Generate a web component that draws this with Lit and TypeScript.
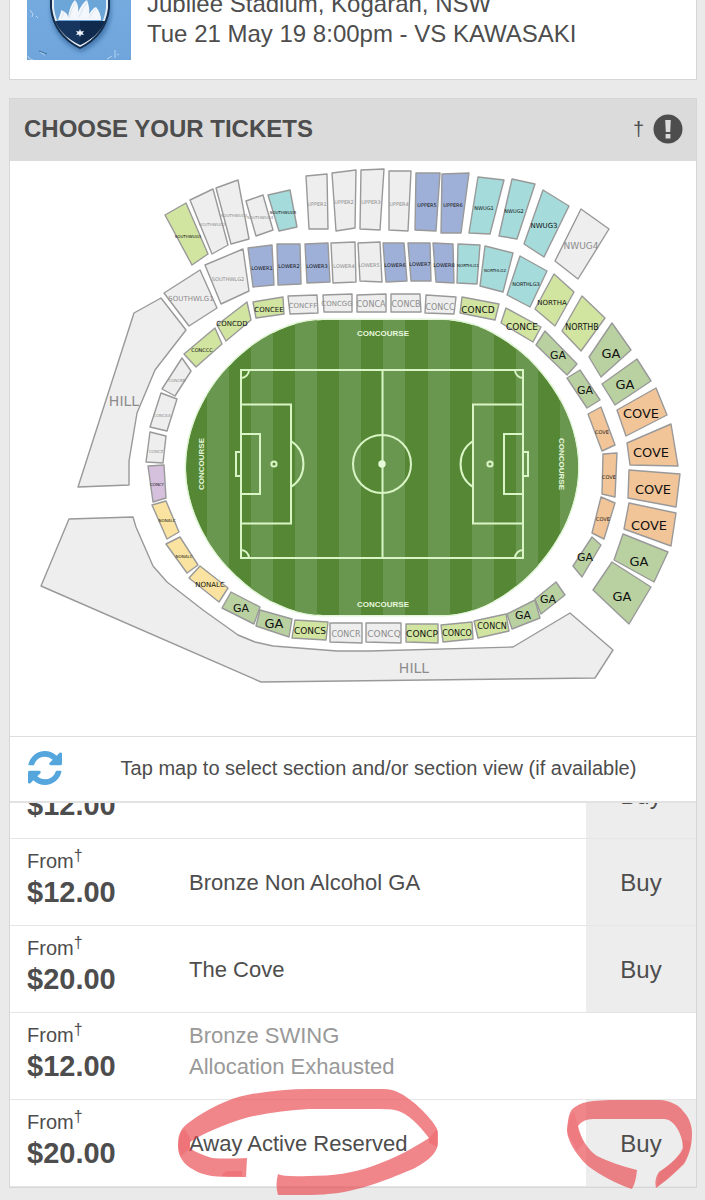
import { LitElement, html, css, svg, nothing } from "lit";
import { customElement, property } from "lit/decorators.js";

type Kind = "off" | "lime" | "sage" | "blue" | "teal" | "cove" | "sand" | "lilac";

interface Section {
  kind: Kind;
  points: string;
  label: string;
  x: number;
  y: number;
  size: number;
}

const s = (kind: Kind, label: string, size: number, x: number, y: number, points: string): Section => ({
  kind, label, size, x, y, points,
});

const SECTIONS: Section[] = [
  s("off", "HILL", 14, 124, 401, "161,298 134,313 78,487 129,485 129,461 137,413 155,370 186,330"),
  s("off", "HILL", 14, 414, 668, "69,519 133,517 136,527 153,566 167,582 203,610 238,635 255,642 273,646 337,651 370,651 513,647 570,613 613,650 595,678 261,682 41,586"),
  s("lime", "SOUTHWUG1", 4, 188, 236, "165,215 186,203 208,254 192,265"),
  s("off", "SOUTHWUG2", 4, 212, 224, "190,200 213,189 228,245 212,254"),
  s("off", "SOUTHWUG3", 4, 234, 215, "216,188 238,180 249,239 231,244"),
  s("off", "SOUTHWUG4", 4, 260, 217, "246,201 263,195 273,230 256,236"),
  s("teal", "SOUTHWUG5", 4, 283, 212, "268,195 290,190 297,227 279,231"),
  s("off", "UPPER1", 5, 317, 204, "306,176 327,174 328,229 309,229"),
  s("off", "UPPER2", 5, 344, 202, "332,173 356,170 355,228 336,231"),
  s("off", "UPPER3", 5, 371, 202, "361,170 384,169 380,230 360,229"),
  s("off", "UPPER4", 5, 399, 204, "389,171 411,171 408,231 389,230"),
  s("blue", "UPPER5", 5, 427, 205, "416,173 440,173 436,231 415,230"),
  s("blue", "UPPER6", 5, 453, 205, "442,174 469,173 461,233 441,233"),
  s("teal", "NWUG1", 5, 484, 208, "478,177 504,180 490,234 469,233"),
  s("teal", "NWUG2", 5, 514, 211, "512,179 535,184 517,239 499,236"),
  s("teal", "NWUG3", 7, 544, 226, "543,190 569,206 544,257 524,244"),
  s("off", "NWUG4", 9, 581, 246, "581,209 609,229 578,279 555,261"),
  s("off", "SOUTHWLG1", 7, 191, 299, "164,293 200,270 217,308 189,326"),
  s("off", "SOUTHWLG2", 5, 228, 279, "205,265 243,249 249,291 221,304"),
  s("blue", "LOWER1", 5, 262, 268, "248,248 272,245 274,285 253,287"),
  s("blue", "LOWER2", 5, 289, 266, "277,244 300,244 301,284 278,285"),
  s("blue", "LOWER3", 5, 317, 266, "305,244 328,243 330,282 307,283"),
  s("off", "LOWER4", 5, 344, 266, "331,243 355,242 356,282 333,283"),
  s("off", "LOWER5", 5, 369, 265, "358,243 380,242 382,282 360,281"),
  s("blue", "LOWER6", 5, 395, 265, "383,243 404,243 407,281 386,282"),
  s("blue", "LOWER7", 5, 420, 264, "408,243 430,243 431,281 411,281"),
  s("blue", "LOWER8", 5, 444, 265, "433,243 453,244 454,283 436,282"),
  s("teal", "NORTHLG1", 4, 468, 265, "458,244 480,245 477,284 457,283"),
  s("teal", "NORTHLG2", 4, 495, 270, "485,246 513,253 503,292 480,286"),
  s("teal", "NORTHLG3", 5, 526, 284, "520,256 547,271 530,307 507,295"),
  s("lime", "NORTHA", 7, 552, 303, "554,274 574,292 555,326 535,309"),
  s("lime", "NORTHB", 8, 582, 327, "582,296 605,318 581,351 562,331"),
  s("sage", "GA", 13, 611, 353, "612,323 631,350 601,377 589,357"),
  s("sage", "GA", 13, 625, 384, "637,359 651,381 615,405 602,384"),
  s("cove", "COVE", 13, 641, 413, "656,388 667,415 626,436 617,410"),
  s("cove", "COVE", 13, 651, 452, "671,424 678,466 630,465 627,443"),
  s("cove", "COVE", 13, 653, 489, "629,470 680,474 676,507 628,498"),
  s("cove", "COVE", 13, 649, 525, "629,503 676,513 671,546 624,529"),
  s("sage", "GA", 13, 639, 561, "623,534 668,552 654,582 614,560"),
  s("sage", "GA", 13, 622, 596, "612,562 651,587 629,624 593,590"),
  s("sage", "GA", 11, 558, 355, "545,331 577,364 567,375 536,345"),
  s("sage", "GA", 11, 585, 390, "580,370 600,400 587,408 567,378"),
  s("cove", "COVE", 5, 602, 432, "601,407 615,445 602,451 588,414"),
  s("cove", "COVE", 5, 609, 477, "603,454 617,453 615,497 602,494"),
  s("cove", "COVE", 5, 603, 519, "601,497 615,503 604,539 592,533"),
  s("sage", "GA", 11, 585, 557, "592,537 601,545 582,577 573,566"),
  s("sage", "GA", 11, 548, 599, "556,582 565,595 541,614 535,599"),
  s("sage", "GA", 11, 523, 615, "535,600 540,618 512,629 507,614"),
  s("lime", "CONCN", 8, 492, 626, "506,614 509,631 478,638 474,621"),
  s("lime", "CONCO", 8, 457, 633, "441,625 472,622 473,639 443,642"),
  s("lime", "CONCP", 9, 422, 634, "406,624 438,624 438,643 406,642"),
  s("off", "CONCQ", 9, 384, 634, "366,623 401,623 401,643 366,642"),
  s("off", "CONCR", 8, 346, 634, "330,623 362,623 362,643 330,642"),
  s("lime", "CONCS", 9, 310, 631, "295,620 328,622 326,640 292,638"),
  s("sage", "GA", 13, 274, 623, "260,610 292,619 289,637 256,626"),
  s("sage", "GA", 11, 241, 608, "231,592 260,607 254,624 222,608"),
  s("sand", "NONALC", 7, 210, 585, "200,566 228,588 219,602 189,578"),
  s("sand", "NONALC", 4, 184, 556, "180,537 198,565 187,573 166,544"),
  s("sand", "NONALC", 4, 167, 520, "166,501 179,532 167,539 152,505"),
  s("lilac", "CONCY", 4, 157, 484, "148,466 164,465 166,498 153,502"),
  s("off", "CONCZ", 4, 156, 451, "150,432 166,436 163,463 146,462"),
  s("off", "CONCAA", 4, 162, 415, "161,393 177,399 167,431 150,427"),
  s("off", "CONCBB", 4, 177, 380, "182,358 191,371 175,396 162,389"),
  s("lime", "CONCCC", 5, 202, 350, "215,328 222,344 196,367 184,354"),
  s("lime", "CONCDD", 7, 232, 324, "217,325 247,302 251,320 226,341"),
  s("lime", "CONCEE", 7, 269, 310, "253,302 283,297 284,314 256,318"),
  s("off", "CONCFF", 7, 303, 306, "288,296 317,295 318,313 290,314"),
  s("off", "CONCGG", 7, 337, 304, "323,295 352,294 352,312 324,312"),
  s("off", "CONCA", 8, 371, 304, "357,295 386,294 386,312 357,312"),
  s("off", "CONCB", 8, 406, 304, "391,294 420,294 421,312 391,312"),
  s("off", "CONCC", 8, 440, 307, "426,295 456,297 454,314 425,313"),
  s("lime", "CONCD", 9, 478, 310, "462,297 499,304 495,320 460,313"),
  s("lime", "CONCE", 9, 522, 327, "506,308 541,327 533,342 501,323"),
];

@customElement("stadium-map")
class StadiumMap extends LitElement {
  static styles = css`
    :host { display: block; }
    .map { display: block; width: 100%; height: auto; }
    .shape { stroke: #999; stroke-width: 1.4; stroke-linejoin: round; }
    .off { fill: #eee; }
    .lime { fill: #d1e5a0; }
    .sage { fill: #b9d0a1; }
    .blue { fill: #9eb0d7; }
    .teal { fill: #a5dbdb; }
    .cove { fill: #f2c599; }
    .sand { fill: #fae3a0; }
    .lilac { fill: #d5c1dd; }
    .label {
      font-family: "DejaVu Sans", sans-serif;
      text-anchor: middle;
      dominant-baseline: central;
      fill: #111;
    }
    .muted { fill: #8c8c8c; }
    .grass { fill: #558735; }
    .glow { fill: none; stroke: #e2f5d8; stroke-width: 3; }
    .stripe { fill: #6a974f; }
    .line { fill: none; stroke: #d9f5c6; stroke-width: 2; }
    .spot { fill: #e6fbd8; }
    .concourse {
      font-family: "Liberation Sans Narrow", "Liberation Sans", sans-serif;
      font-weight: bold;
      font-size: 8px;
      text-anchor: middle;
      dominant-baseline: central;
      fill: #e6f7dc;
    }
  `;

  render() {
    const oval = "M323 320H443C505 320 578 390 578 467C578 544 505 615 443 615H323C259 615 186 544 186 467C186 390 259 320 323 320Z";
    const stripes = [207, 251, 295, 339, 383, 428, 472, 516, 560];
    return html`
      <svg class="map" viewBox="10 161 686 575" role="img" aria-label="Stadium seating map">
        <defs><clipPath id="oval"><path d=${oval} /></clipPath></defs>
        <path class="glow" d=${oval} />
        <g clip-path="url(#oval)">
          <path class="grass" d=${oval} />
          ${stripes.map((x) => svg`<rect class="stripe" x=${x} y="319" width="22" height="296" />`)}
        </g>
        <g class="line">
          <rect x="241" y="370" width="282" height="188" />
          <path d="M382.500 370V558" />
          <circle cx="382" cy="464" r="29" />
          <path d="M241 404.500H291V523.500H241M241 434H260V494H241M241 452H236V476H241" />
          <path d="M523 404.500H473V523.500H523M523 434H504V494H523M523 452H528V476H523" />
          <path d="M291 441A27.500 27.500 0 0 1 291 487M473 441A27.500 27.500 0 0 0 473 487" />
          <path d="M249 370A8 8 0 0 1 241 378M515 370A8 8 0 0 0 523 378M249 558A8 8 0 0 0 241 550M515 558A8 8 0 0 1 523 550" />
          <circle cx="274" cy="464" r="2.600" />
          <circle cx="490" cy="464" r="2.600" />
        </g>
        <circle class="spot" cx="382" cy="464" r="3.700" />
        <text class="concourse" x="383" y="333">CONCOURSE</text>
        <text class="concourse" x="383" y="604">CONCOURSE</text>
        <text class="concourse" transform="translate(201 464) rotate(-90)">CONCOURSE</text>
        <text class="concourse" transform="translate(561 464) rotate(90)">CONCOURSE</text>
        ${SECTIONS.map((a) => svg`<polygon class="shape ${a.kind}" points=${a.points} />`)}
        ${SECTIONS.map((a) => svg`<text class="label ${a.kind === "off" ? "muted" : ""}" x=${a.x} y=${a.y} font-size=${a.size}>${a.label}</text>`)}
      </svg>
    `;
  }
}

@customElement("club-badge")
class ClubBadge extends LitElement {
  static styles = css`
    :host { display: block; width: 104px; height: 104px; }
    .badge { display: block; width: 100%; height: 100%; }
  `;

  render() {
    return html`
      <svg class="badge" viewBox="0 0 104 104" role="img" aria-label="Club badge">
        <defs>
          <linearGradient id="sky" x1="0" y1="0" x2="0" y2="1">
            <stop offset="0" stop-color="#79aee2" /><stop offset="1" stop-color="#6fa5db" />
          </linearGradient>
          <filter id="soft"><feGaussianBlur stdDeviation="2" /></filter>
        </defs>
        <rect width="104" height="104" fill="url(#sky)" />
        <path d="M24 38H84V58Q82 84 54 96Q26 84 24 58Z" fill="#34669c" opacity=".7" filter="url(#soft)" />
        <path d="M23 36H83V52Q80 80 53 93Q26 80 23 52Z" fill="#142d4d" />
        <path d="M25 36H81V52Q78 78 53 91Q28 78 25 52Z" fill="#e4edf5" />
        <path d="M27 36H79V52Q76 77 53 89Q30 77 27 52Z" fill="#6ca6d8" />
        <path d="M28 65H78Q72 80 53 89Q34 80 28 65Z" fill="#17365f" />
        <path d="M53 65H78Q72 80 53 89Z" fill="#102a4d" />
        <path d="M31 64Q35 54 34 54Q41 57 41 61Q43 49 48 44Q52 49 51 56Q56 46 60 44Q63 52 62 58Q67 51 69 51Q74 57 74 64Z" fill="#f3f7fb" />
        <path d="M42 62Q44 52 49 46M52 61Q56 51 60 46M62 62Q66 55 69 53M34 62Q37 60 36 56" fill="none" stroke="#cfe0f0" stroke-width=".8" />
        <path d="M53 73L54 75.500L57 75L55.500 77L57 79L54 78.500L53 81L52 78.500L49 79L50.500 77L49 75L52 75.500Z" fill="#f0f6fc" />
        <path d="M3 54L6 58L5 61M9 60L11 62M13 96L18 99M88 94V102M92 98L90 99M85 100L80 103M1 100Q1 103 6 104" fill="none" stroke="#b8d5f1" />
        <path d="M12 95L20 98" fill="none" stroke="#3e719f" />
      </svg>
    `;
  }
}

@customElement("ticket-row")
class TicketRow extends LitElement {
  @property() price = "";
  @property() name = "";
  @property() note = "";
  @property({ type: Boolean }) circled = false;

  static styles = css`
    :host { display: block; }
    .row {
      display: grid;
      grid-template-columns: 162px 1fr 110px;
      height: 86px;
      border-bottom: 1px solid #e6e6e6;
      padding-left: 17px;
      color: #4d4d4d;
    }
    .cost { display: flex; flex-direction: column; padding-top: 9px; }
    .from { font-size: 20px; line-height: 26px; }
    .dagger { font-size: 16px; line-height: 0; vertical-align: 7px; }
    .price { font-size: 29px; line-height: 36px; font-weight: bold; }
    .info {
      position: relative;
      display: flex;
      flex-direction: column;
      justify-content: center;
      font-size: 22px;
      line-height: 31px;
    }
    .sold { color: #999; padding-bottom: 10px; }
    .action { position: relative; display: grid; }
    .buy {
      border: 0;
      padding: 2px 0 0;
      background: #ededed;
      color: #4d4d4d;
      font-family: inherit;
      font-size: 24px;
    }
    .mark { position: absolute; pointer-events: none; fill: #e8464d; fill-opacity: 0.66; overflow: visible; }
    .mark-name { left: -12px; top: -12px; width: 262px; height: 108px; }
    .mark-buy { left: -20px; top: -1px; width: 128px; height: 92px; }
  `;

  render() {
    return html`
      <div class="row">
        <div class="cost">
          <span class="from">From<span class="dagger">†</span></span>
          <span class="price">${this.price}</span>
        </div>
        <div class="info ${this.note ? "sold" : ""}">
          <span>${this.name}</span>
          ${this.note ? html`<span>${this.note}</span>` : nothing}
          ${this.circled ? html`
            <svg class="mark mark-name" viewBox="178 1088 262 108" aria-hidden="true">
              <path d="M247 1177C226 1177 208 1178 195 1170C184 1164 179 1156 179 1146C179 1133 182 1128 192 1121C207 1110 230 1098 248 1095C268 1091 290 1089 310 1089H384C397 1089 405 1095 414 1102C424 1110 438 1125 439 1132V1144C438 1153 429 1161 416 1168C402 1174 377 1185 350 1191C327 1196 302 1195 279 1195Q276 1185 279 1174Q284 1177 310 1176C334 1176 354 1173 374 1166C397 1158 416 1147 430 1138C420 1125 409 1113 396 1110Q390 1109 380 1109H310C290 1110 269 1113 250 1117C225 1124 203 1134 191 1142V1148Q197 1153 213 1158Q226 1159 248 1158Z" />
              <path d="M223 1176Q225 1171 230 1171H243V1176ZM179 1146Q180 1131 186 1129L192 1140L190 1149L182 1156ZM430 1138L438 1129V1147L430 1143Z" opacity=".4" />
            </svg>` : nothing}
        </div>
        <div class="action">
          ${this.note ? nothing : html`<button class="buy" type="button" aria-label="Buy ${this.name}">Buy</button>`}
          ${this.circled ? html`
            <svg class="mark mark-buy" viewBox="566 1099 128 92" aria-hidden="true">
              <path d="M637 1170Q636 1182 632 1189C617 1184 598 1174 588 1166C575 1154 567 1139 567 1130C568 1119 569 1110 575 1107C585 1100 598 1101 610 1100H659C670 1100 680 1106 683 1111C690 1118 692 1127 692 1133C692 1146 689 1156 684 1164C676 1172 665 1182 656 1188Q654 1179 659 1172C670 1165 681 1155 683 1148C683 1135 674 1118 663 1119H593Q583 1119 578 1126C580 1137 587 1149 597 1156Q613 1164 637 1170Z" />
              <path d="M567 1132Q569 1113 574 1112L578 1126L584 1143L577 1151ZM659 1172C675 1161 684 1151 683 1140L691 1142Q688 1160 679 1168L657 1187Z" opacity=".25" />
            </svg>` : nothing}
        </div>
      </div>
    `;
  }
}

@customElement("app-root")
class AppRoot extends LitElement {
  static styles = css`
    :host {
      display: block;
      min-height: 100vh;
      box-sizing: border-box;
      overflow: hidden;
      padding: 0 8px 13px 9px;
      background: #eaeaea;
      color: #4d4d4d;
      font-family: "Liberation Sans", Arial, sans-serif;
    }
    .card { background: #fff; border: 1px solid #d6d6d6; }
    .event {
      display: flex;
      align-items: flex-end;
      gap: 16px;
      height: 60px;
      border-top: 0;
      padding: 0 17px 19px;
      margin-bottom: 18px;
    }
    .details { padding-bottom: 11px; font-size: 24px; line-height: 30px; white-space: nowrap; }
    .line { margin: 0; }
    .head {
      display: flex;
      align-items: center;
      justify-content: space-between;
      height: 60px;
      padding: 0 14px 2px;
      background: #dbdbdb;
    }
    .title { margin: 0; font-size: 24px; line-height: 30px; font-weight: bold; }
    .help { display: flex; align-items: center; gap: 10px; font-size: 20px; }
    .plain { border: 0; padding: 0; background: none; display: block; }
    .icon { display: block; width: 28px; height: 28px; overflow: visible; }
    .tip {
      display: flex;
      align-items: center;
      height: 62px;
      border-top: 1px solid #dedede;
      border-bottom: 2px solid #e2e2e2;
      padding: 0 18px 2px;
      font-size: 20px;
    }
    .refresh { display: block; width: 34px; height: 34px; fill: #55a6dc; }
    .hint { flex: 1; margin: 0; text-align: center; padding-left: 17px; }
    .scrolled { display: flex; flex-direction: column; justify-content: flex-end; height: 36px; overflow: hidden; }
  `;

  render() {
    return html`
      <section class="card event">
        <club-badge></club-badge>
        <div class="details">
          <p class="line">Jubilee Stadium, Kogarah, NSW</p>
          <p class="line">Tue 21 May 19 8:00pm - VS KAWASAKI</p>
        </div>
      </section>
      <section class="card">
        <header class="head">
          <h2 class="title">CHOOSE YOUR TICKETS</h2>
          <div class="help">
            <span>†</span>
            <button class="plain" type="button" aria-label="Ticket information">
              <svg class="icon" viewBox="0 0 28 28" aria-hidden="true">
                <circle cx="14" cy="14" r="14.500" fill="#4d4d4d" />
                <path d="M11.200 5H16.800L16.200 17H11.800ZM11.600 19H16.400V23.500H11.600Z" fill="#dbdbdb" />
              </svg>
            </button>
          </div>
        </header>
        <stadium-map></stadium-map>
        <div class="tip">
          <button class="plain" type="button" aria-label="Reset map">
            <svg class="refresh" viewBox="0 0 1536 1536" aria-hidden="true">
              <path d="M1511 928q0 5-1 7-64 268-268 434.500t-478 166.500q-146 0-282.500-55t-243.500-157l-129 129q-19 19-45 19t-45-19-19-45v-448q0-26 19-45t45-19h448q26 0 45 19t19 45-19 45l-137 137q71 66 161 102t187 36q134 0 250-65t186-179q11-17 53-117 8-23 30-23h192q13 0 22.500 9.500t9.500 22.500zm25-800v448q0 26-19 45t-45 19h-448q-26 0-45-19t-19-45 19-45l138-138q-148-137-349-137-134 0-250 65t-186 179q-11 17-53 117-8 23-30 23h-199q-13 0-22.500-9.500t-9.500-22.500v-7q65-268 270-434.500t480-166.500q146 0 284 55.500t245 156.500l130-129q19-19 45-19t45 19 19 45z" />
            </svg>
          </button>
          <p class="hint">Tap map to select section and/or section view (if available)</p>
        </div>
        <div class="scrolled">
          <ticket-row price="$12.00" name="Bronze General Admission"></ticket-row>
        </div>
        <ticket-row price="$12.00" name="Bronze Non Alcohol GA"></ticket-row>
        <ticket-row price="$20.00" name="The Cove"></ticket-row>
        <ticket-row price="$12.00" name="Bronze SWING" note="Allocation Exhausted"></ticket-row>
        <ticket-row price="$20.00" name="Away Active Reserved" circled></ticket-row>
      </section>
    `;
  }
}
